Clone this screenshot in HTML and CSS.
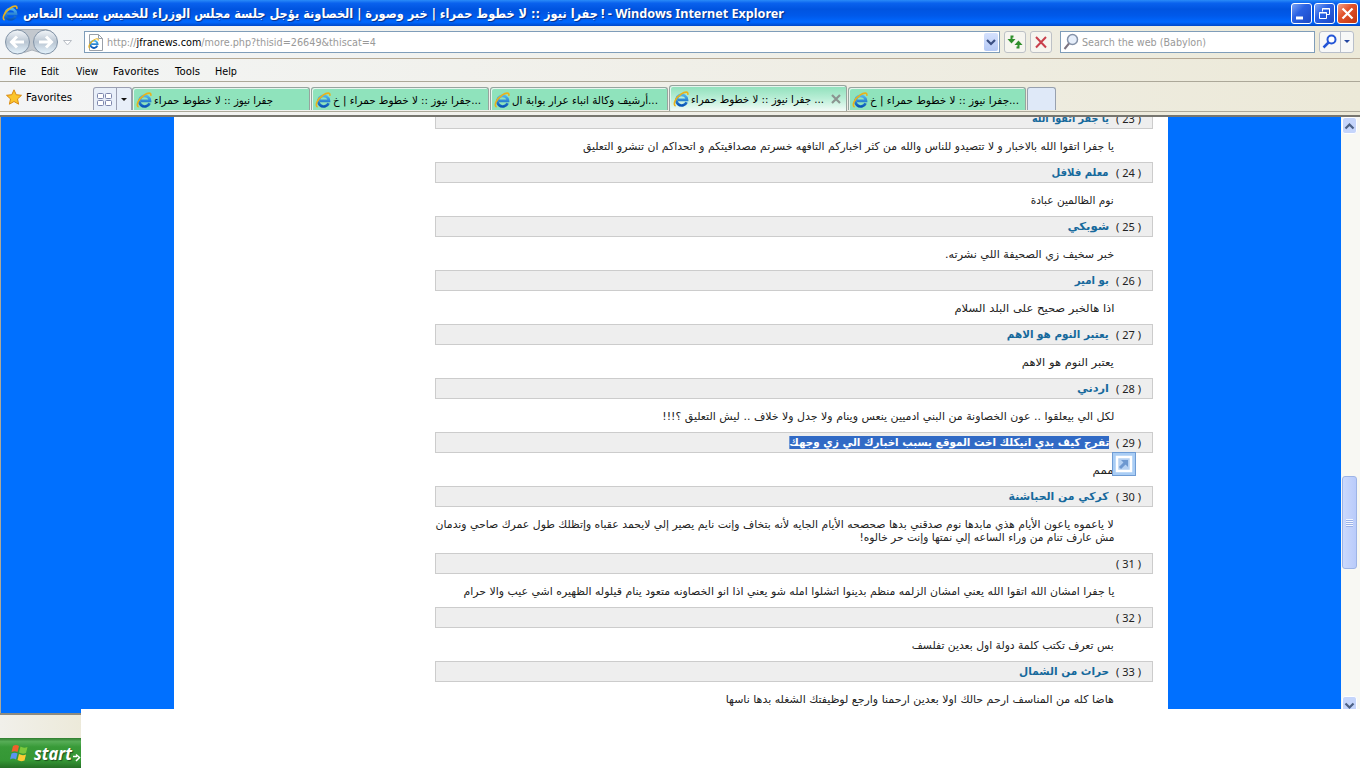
FILE: index.html
```html
<!DOCTYPE html>
<html lang="ar">
<head>
<meta charset="UTF-8">
<title>جفرا نيوز :: لا خطوط حمراء</title>
<link rel="stylesheet" href="styles.css">
</head>
<body>
<svg class="defs">
    <defs>
        <linearGradient id="blue" x1="0" y1="0" x2="0" y2="1">
            <stop offset="0" stop-color="#4fb4ee"/>
            <stop offset="1" stop-color="#0a56b8"/>
        </linearGradient>
        <linearGradient id="round" x1="0" y1="0" x2="0" y2="1">
            <stop offset="0" stop-color="#f4f7fa"/>
            <stop offset=".5" stop-color="#b9c5d2"/>
            <stop offset="1" stop-color="#e6f4fd"/>
        </linearGradient>
        <symbol id="ie" viewBox="0 0 16 16">
            <path d="M13.600 11.200A5.300 5.300 0 1 1 14 8.900H5" fill="none" stroke="url(#blue)" stroke-width="2.700"/>
            <path d="M2.600 15C-.6 13.800 2.600 6.600 8 3.200 12 .4 15.600 .2 14.800 3.800" fill="none" stroke="#e9b21c" stroke-width="1.600"/>
        </symbol>
    </defs>
</svg>

<div class="window">
    <div class="titlebar">
        <svg class="ie"><use href="#ie"/></svg>
        <div class="caption"><span class="fit" data-w="575" dir="rtl">جفرا نيوز :: لا خطوط حمراء | خبر وصورة | الخصاونة يؤجل جلسة مجلس الوزراء للخميس بسبب النعاس</span><span class="fit app" data-w="183">! - Windows Internet Explorer</span></div>
        <div class="win-btns">
            <div class="win-btn"><svg width="19" height="19"><path d="M4 14h7" stroke="#fff" stroke-width="3"/></svg></div>
            <div class="win-btn"><svg width="19" height="19"><path d="M7.500 7.500v-3h7v6H12M4.500 8.500h7v6h-7zM7 5h8M4 9h8" fill="none" stroke="#fff"/></svg></div>
            <div class="win-btn close"><svg width="19" height="19"><path d="M4.500 4.500l10 10M14.500 4.500l-10 10" stroke="#fff" stroke-width="2.200"/></svg></div>
        </div>
    </div>

    <div class="navbar">
        <svg class="backfwd" width="80" height="32" viewBox="0 0 80 32">
            <path d="M17 3.500h29q5 0 9 6v12q-4 5-9 5.500-7 0-14-3-7 3-14 3-6-.5-9-5.500v-12q3-6 8-6z" fill="#c3c8ce" stroke="#aeb4bb"/>
            <circle cx="17.500" cy="16" r="12" fill="url(#round)" stroke="#8293a6"/>
            <circle cx="45.500" cy="16" r="12" fill="url(#round)" stroke="#8293a6"/>
            <path d="M24 16H12M17 10.500L11.500 16l5.500 5.500M39 16h12M46 10.500l5.500 5.500-5.500 5.500" fill="none" stroke="#fff" stroke-width="3"/>
            <path d="M63.500 14.500h8l-4 4.500z" fill="#fff" stroke="#b9bec6"/>
        </svg>
        <div class="address">
            <svg class="page" width="15" height="17" viewBox="0 0 15 17"><path d="M1.500 .5h9l4 4v12h-13z" fill="#fff" stroke="#9aa0a8"/><path d="M10.500 .5v4h4" fill="none" stroke="#9aa0a8"/><use href="#ie" x="0" y="4" width="11" height="11"/></svg>
            <span class="fit url" data-w="269">http://<b>jfranews.com</b>/more.php?thisid=26649&amp;thiscat=4</span>
            <div class="drop"><svg width="14" height="18"><path d="M3 7l4 4 4-4" fill="none" stroke="#3a4f82" stroke-width="2.200"/></svg></div>
        </div>
        <div class="tool refresh"><svg width="20" height="20"><path d="M8.500 4.500H6.500V8" fill="none" stroke="#2f8f2b" stroke-width="2"/><path d="M2.500 7h8l-4 4.500z" fill="#2f8f2b"/><path d="M11.500 15.500h2V12" fill="none" stroke="#2f8f2b" stroke-width="2"/><path d="M9.500 13h8l-4-4.500z" fill="#2f8f2b"/></svg></div>
        <div class="tool"><svg width="20" height="20"><path d="M5 5l10 10.500M15 5L5 15.500" stroke="#c9404c" stroke-width="2"/></svg></div>
        <div class="search">
            <svg width="18" height="18"><circle cx="10.500" cy="6.500" r="5" fill="#e6eefa" stroke="#8592a8" stroke-width="1.500"/><path d="M7 10.500L2.500 16" stroke="#7c7480" stroke-width="2"/></svg>
            <span class="fit" data-w="124">Search the web (Babylon)</span>
        </div>
        <div class="go">
            <svg width="20" height="20"><circle cx="11.500" cy="7.500" r="4" fill="#fff" stroke="#2456d6" stroke-width="2"/><path d="M8.500 10.500l-5 5" stroke="#2456d6" stroke-width="2.500"/></svg>
            <i><svg width="13" height="20"><path d="M3 8h6l-3 3z" fill="#2446a0"/></svg></i>
        </div>
    </div>

    <div class="menubar">
        <span class="fit" data-w="17">File</span>
        <span class="fit" data-w="18">Edit</span>
        <span class="fit view-item" data-w="22">View</span>
        <span class="fit" data-w="46">Favorites</span>
        <span class="fit tools-item" data-w="25">Tools</span>
        <span class="fit" data-w="22">Help</span>
    </div>

    <div class="tabbar">
        <div class="fav">
            <svg width="16" height="16" viewBox="0 0 16 16"><path d="M8 .8l2.200 4.900 5.300.6-4 3.600 1.100 5.300L8 12.500l-4.600 2.700 1.100-5.300-4-3.600 5.300-.6z" fill="#fcc52c" stroke="#d98a12"/></svg>
            <span class="fit" data-w="46">Favorites</span>
        </div>
        <div class="quick">
            <svg width="22" height="22"><rect x="3.500" y="5.500" width="6" height="5" rx="1"/><rect x="11.500" y="5.500" width="6" height="5" rx="1"/><rect x="3.500" y="12.500" width="6" height="5" rx="1"/><rect x="11.500" y="12.500" width="6" height="5" rx="1"/></svg>
            <i><svg width="14" height="22"><path d="M4 10h6l-3 3z" fill="#111"/></svg></i>
        </div>
        <div class="tab"><svg class="ie"><use href="#ie"/></svg><span class="fit" data-w="119" dir="rtl">جفرا نيوز :: لا خطوط حمراء</span></div>
        <div class="tab"><svg class="ie"><use href="#ie"/></svg><span class="fit" data-w="148" dir="rtl">...جفرا نيوز :: لا خطوط حمراء | خ</span></div>
        <div class="tab"><svg class="ie"><use href="#ie"/></svg><span class="fit" data-w="146" dir="rtl">...أرشيف وكالة انباء عرار بوابة ال</span></div>
        <div class="tab active"><svg class="ie"><use href="#ie"/></svg><span class="fit" data-w="133" dir="rtl">... جفرا نيوز :: لا خطوط حمراء</span><svg class="x" width="10" height="10"><path d="M1 1l8 8M9 1L1 9" stroke="#8b9490" stroke-width="2.200"/></svg></div>
        <div class="tab"><svg class="ie"><use href="#ie"/></svg><span class="fit" data-w="149" dir="rtl">...جفرا نيوز :: لا خطوط حمراء | خ</span></div>
        <div class="newtab"></div>
    </div>

    <div class="view">
        <div class="page-body">
            <div class="comments" dir="rtl">
                <div class="head"><span class="num">( 23 )</span><b class="fit" data-w="77">يا جفر اتقوا الله</b></div>
                <div class="msg"><span class="fit" data-w="531">يا جفرا اتقوا الله بالاخبار و لا تتصيدو للناس والله من كثر اخباركم التافهه خسرتم مصداقيتكم و اتحداكم ان تنشرو التعليق</span></div>
                <div class="head"><span class="num">( 24 )</span><b class="fit" data-w="57">معلم فلافل</b></div>
                <div class="msg"><span class="fit" data-w="83">نوم الظالمين عبادة</span></div>
                <div class="head"><span class="num">( 25 )</span><b class="fit" data-w="42">شوبكي</b></div>
                <div class="msg"><span class="fit" data-w="169">خبر سخيف زي الصحيفة اللي نشرته.</span></div>
                <div class="head"><span class="num">( 26 )</span><b class="fit" data-w="34">بو امير</b></div>
                <div class="msg"><span class="fit" data-w="160">اذا هالخبر صحيح على البلد السلام</span></div>
                <div class="head"><span class="num">( 27 )</span><b class="fit" data-w="102">يعتبر النوم هو الاهم</b></div>
                <div class="msg"><span class="fit" data-w="92">يعتبر النوم هو الاهم</span></div>
                <div class="head"><span class="num">( 28 )</span><b class="fit" data-w="32">اردني</b></div>
                <div class="msg"><span class="fit" data-w="452">لكل الي بيعلقوا .. عون الخصاونة من البني ادميين ينعس وينام ولا جدل ولا خلاف .. ليش التعليق ؟!!!</span></div>
                <div class="head"><span class="num">( 29 )</span><b class="fit selected" data-w="320">تفرج كيف بدي انيكلك اخت الموقع بسبب اخبارك الي زي وجهك</b></div>
                <div class="msg accel-row"><span class="fit" data-w="21">ممم</span>
                    <div class="accel"><svg width="22" height="22"><path d="M4 4h14v14H4z" fill="#b4d0f2" stroke="#fff" stroke-width="2.500"/><path d="M7 15l5-5" stroke="#6d98d0" stroke-width="3"/><path d="M8 7h7v7z" fill="#6d98d0"/></svg></div>
                </div>
                <div class="head"><span class="num">( 30 )</span><b class="fit" data-w="100">كركي من الحباشنة</b></div>
                <div class="msg"><span class="fit" data-w="678">لا ياعموه ياعون الأيام هذي مابدها نوم صدقني بدها صحصحه الأيام الجايه لأنه بتخاف وإنت نايم يصير إلي لايحمد عقباه وإتظلك طول عمرك صاحي وندمان</span><span class="fit" data-w="255">مش عارف تنام من وراء الساعه إلي نمتها وإنت حر خالوه!</span></div>
                <div class="head"><span class="num">( 31 )</span></div>
                <div class="msg"><span class="fit" data-w="651">يا جفرا امشان الله اتقوا الله يعني امشان الزلمه منظم بدينوا اتشلوا امله شو يعني اذا انو الخصاونه متعود ينام قيلوله الظهيره اشي عيب والا حرام</span></div>
                <div class="head"><span class="num">( 32 )</span></div>
                <div class="msg"><span class="fit" data-w="202">بس تعرف تكتب كلمة دولة اول بعدين تفلسف</span></div>
                <div class="head"><span class="num">( 33 )</span><b class="fit" data-w="90">حراث من الشمال</b></div>
                <div class="msg"><span class="fit" data-w="388">هاضا كله من المناسف ارحم حالك اولا بعدين ارحمنا وارجع لوظيفتك الشغله بدها ناسها</span></div>
            </div>
        </div>
        <div class="scroll">
            <div class="sb-btn"><svg width="15" height="15"><path d="M3.500 9.500l4-4 4 4" fill="none" stroke="#4d6185" stroke-width="2.200"/></svg></div>
            <div class="thumb"><i></i><i></i><i></i><i></i></div>
            <div class="sb-btn down"><svg width="15" height="15"><path d="M3.500 5.500l4 4 4-4" fill="none" stroke="#4d6185" stroke-width="2.200"/></svg></div>
        </div>
    </div>

    <div class="status"></div>
    <div class="taskbar">
        <svg width="20" height="20" viewBox="0 0 20 20">
            <path d="M3 3q3-2 6 0l-1.500 6q-3-1.500-6 0z" fill="#f0602c"/>
            <path d="M10.500 3.500q3 2 7 .5l-1.500 6q-3.500 1.500-7-.5z" fill="#7cc83c"/>
            <path d="M1.500 10.500q3-1.500 6 0L6 16.500q-3-2-6 0z" fill="#5a94f0"/>
            <path d="M9 11q3.500 2 7 .5l-1.500 6q-4 1.500-7-.5z" fill="#fbcb34"/>
        </svg>
        <span class="fit" data-w="38">start</span>
        <svg class="cursor" width="8" height="9"><path d="M0 3.500h4M3 1.500l3.500 3L3 8" fill="none" stroke="#fff" stroke-width="1.500"/></svg>
    </div>
    <div class="blank"></div>
</div>

<script src="script.js"></script>
</body>
</html>
```
FILE: styles.css
```css
* {
    box-sizing: border-box;
}
body {
    margin: 0;
    font-family: "DejaVu Sans", sans-serif;
    font-size: 11px;
    color: #000;
    overflow: hidden;
}
svg {
    display: block;
    flex: none;
}
.defs {
    position: absolute;
    width: 0;
    height: 0;
}
.window {
    position: relative;
    width: 1360px;
    height: 768px;
    overflow: hidden;
    background: #fff;
}
.fit {
    display: block;
    flex: none;
    white-space: nowrap;
}
.ie {
    width: 16px;
    height: 16px;
}

/* title bar */
.titlebar {
    display: flex;
    align-items: center;
    height: 26px;
    padding: 0 2px;
    background: linear-gradient(#2a8bf8 0, #0a62ee 12%, #0054e0 35%, #0059ea 60%, #0068ff 85%, #0048c8 100%);
}
.caption {
    display: flex;
    flex: 1;
    align-items: center;
    gap: 3px;
    padding-left: 5px;
    font-size: 13px;
    font-weight: bold;
    color: #fff;
    text-shadow: 1px 1px 1px #0a2f86;
}
.app {
    font-family: "Noto Sans", sans-serif;
    font-size: 12px;
}
.win-btns {
    display: flex;
    gap: 2px;
}
.win-btn {
    width: 21px;
    height: 21px;
    border: 1px solid #fff;
    border-radius: 3px;
    background: linear-gradient(135deg, #7da4f4, #2a62e4 40%, #1c48c4);
}
.close {
    background: linear-gradient(135deg, #f0a088, #e2532c 40%, #c03410);
}

/* address and search */
.navbar {
    display: flex;
    align-items: flex-start;
    height: 33px;
    padding-top: 5px;
    border-bottom: 1px solid #b5a894;
    background: linear-gradient(90deg, #f3f5f7, #f0f0ea 50%, #ece9d8);
}
.backfwd {
    margin: -5px 4px 0 0;
}
.address {
    display: flex;
    align-items: center;
    width: 916px;
    height: 22px;
    padding: 0 1px 0 3px;
    border: 1px solid #7f9db9;
    background: #fff;
}
.url {
    margin-left: 4px;
    padding-top: 1px;
    color: #999;
}
.url b {
    font-weight: normal;
    color: #000;
}
.drop {
    width: 14px;
    height: 18px;
    margin-left: auto;
    border-radius: 2px;
    background: linear-gradient(#d5e1fd, #b5c9f5);
}
.tool {
    width: 22px;
    height: 22px;
    margin-left: 4px;
    border: 1px solid #bdc1c6;
    border-radius: 3px;
    background: #f6f5ef;
}
.search {
    display: flex;
    align-items: center;
    width: 255px;
    height: 22px;
    margin-left: 8px;
    padding-left: 1px;
    border: 1px solid #7f9db9;
    background: #fff;
    color: #999;
}
.search .fit {
    margin-left: 2px;
    padding-top: 1px;
}
.go {
    display: flex;
    width: 35px;
    height: 22px;
    margin-left: 4px;
    border: 1px solid #b8bfca;
    border-radius: 3px;
    background: #f7f8f8;
}
.go i {
    border-left: 1px solid #b8bfca;
}

/* menu */
.menubar {
    display: flex;
    align-items: center;
    height: 23px;
    padding: 3px 0 0 9px;
    gap: 15px;
    border-bottom: 1px solid #aca899;
    background: linear-gradient(90deg, #f3f5f5, #f0efe8 50%, #ece9d8);
}
.view-item {
    margin-left: 2px;
}
.tools-item {
    margin-left: 1px;
}

/* tabs */
.tabbar {
    display: flex;
    align-items: flex-end;
    height: 35px;
    padding-bottom: 5px;
    border-bottom: 2px solid #77766f;
    background: linear-gradient(#aca899, #aca899) 0 29px / 100% 1px no-repeat, linear-gradient(90deg, #f4f5f6, #f0efe8 50%, #ece9d8);
}
.fav {
    display: flex;
    align-items: center;
    gap: 4px;
    width: 93px;
    height: 26px;
    padding-left: 6px;
}
.quick {
    display: flex;
    width: 39px;
    height: 23px;
    border: 1px solid #9a9fb2;
    border-bottom: 0;
    border-radius: 3px 3px 0 0;
    background: #e8eff9;
}
.quick rect {
    fill: #fff;
    stroke: #7d86ac;
}
.quick i {
    border-left: 1px solid #9a9fb2;
}
.tab {
    display: flex;
    align-items: center;
    gap: 2px;
    width: 178px;
    height: 23px;
    margin-right: 1px;
    padding: 1px 0 0 3px;
    border: 1px solid #97a49f;
    border-bottom: 0;
    border-radius: 3px 3px 0 0;
    box-shadow: inset 1px 1px 0 #e4f6ee;
    background: #8fe3bc;
}
.tab .fit {
    padding-top: 1px;
}
.active {
    height: 26px;
    margin-bottom: -1px;
    background: linear-gradient(#8fe0bb, #b9eed6 50%, #f4fbf8);
}
.x {
    margin-left: 5px;
}
.newtab {
    width: 29px;
    height: 23px;
    border: 1px solid #97a0ae;
    border-bottom: 0;
    border-radius: 3px 3px 0 0;
    background: #dfe9f8;
}

/* page */
.view {
    display: flex;
    height: 596px;
    border-left: 1px solid #aca899;
    background: #0070ff;
    overflow: hidden;
}
.page-body {
    width: 994px;
    margin-left: 173px;
    padding: 0 15px 0 261px;
    background: #fff;
}
.comments {
    margin-top: -9px;
}
.head {
    display: flex;
    align-items: center;
    height: 21px;
    padding-right: 11px;
    border: 1px solid #ccc;
    background: #eee;
    color: #222;
}
.num {
    width: 32px;
    font-family: "Noto Sans", sans-serif;
    white-space: nowrap;
}
.head b {
    line-height: 13px;
    color: #16699c;
}
.head .selected {
    background: #316ac5;
    color: #fff;
}
.msg {
    padding: 11px 39px 9px 0;
    line-height: 13px;
    color: #222;
}
.msg .fit {
    height: 13px;
}
.accel-row {
    position: relative;
}
.accel {
    position: absolute;
    top: -1px;
    right: 17px;
    width: 24px;
    height: 24px;
    border: 1px solid #6f9cd4;
    background: #a9cdf5;
}

.scroll {
    display: flex;
    flex-direction: column;
    width: 19px;
    margin-left: auto;
    padding: 0 1px;
    background: #f8f8f3;
}
.sb-btn {
    width: 15px;
    height: 17px;
    padding-top: 1px;
    border: 1px solid #fff;
    border-radius: 3px;
    background: #c5d5fb;
}
.sb-btn svg {
    margin-left: -1px;
}
.thumb {
    display: flex;
    flex-direction: column;
    align-items: center;
    justify-content: center;
    gap: 1px;
    width: 15px;
    height: 93px;
    margin-top: 342px;
    border: 1px solid #9db4e6;
    border-radius: 3px;
    background: linear-gradient(90deg, #cbd9fd, #b9cbfa);
}
.thumb i {
    width: 7px;
    height: 1px;
    background: #f2f6ff;
    box-shadow: 0 1px 0 #9cb2e8;
}
.down {
    margin-top: 127px;
}

/* bottom edge */
.status {
    height: 25px;
    border-top: 2px solid #8d8b80;
    background: linear-gradient(90deg, #f1f0ea, #ece9d8 90px);
}
.taskbar {
    display: flex;
    align-items: center;
    height: 30px;
    padding-left: 10px;
    background: linear-gradient(#2f7d2f, #56ad56 12%, #389a38 30%, #359735 75%, #256f25);
    color: #fff;
    font: italic bold 18px "Noto Sans", sans-serif;
    text-shadow: 1px 1px 1px #1c4f1c;
}
.taskbar .fit {
    margin-left: 4px;
}
.cursor {
    margin: 8px 0 0 1px;
}
.blank {
    position: absolute;
    top: 709px;
    left: 81px;
    right: 0;
    bottom: 0;
    background: #fff;
}
```
FILE: script.js
```javascript
// squeeze every label to the width it has in the layout
document.querySelectorAll('.fit').forEach(el => {
    const range = document.createRange();
    range.selectNodeContents(el);
    const natural = range.getBoundingClientRect().width;
    const width = Number(el.dataset.w);
    const rtl = getComputedStyle(el).direction === 'rtl';
    const inComments = el.closest('.comments') !== null;

    el.style.width = natural + 'px';
    el.style.transformOrigin = rtl && inComments ? 'right center' : 'left center';
    el.style.transform = `scaleX(${width / natural})`;
    if (rtl && inComments) {
        el.style.marginLeft = (width - natural) + 'px';
    } else {
        el.style.marginRight = (width - natural) + 'px';
    }
});
```
